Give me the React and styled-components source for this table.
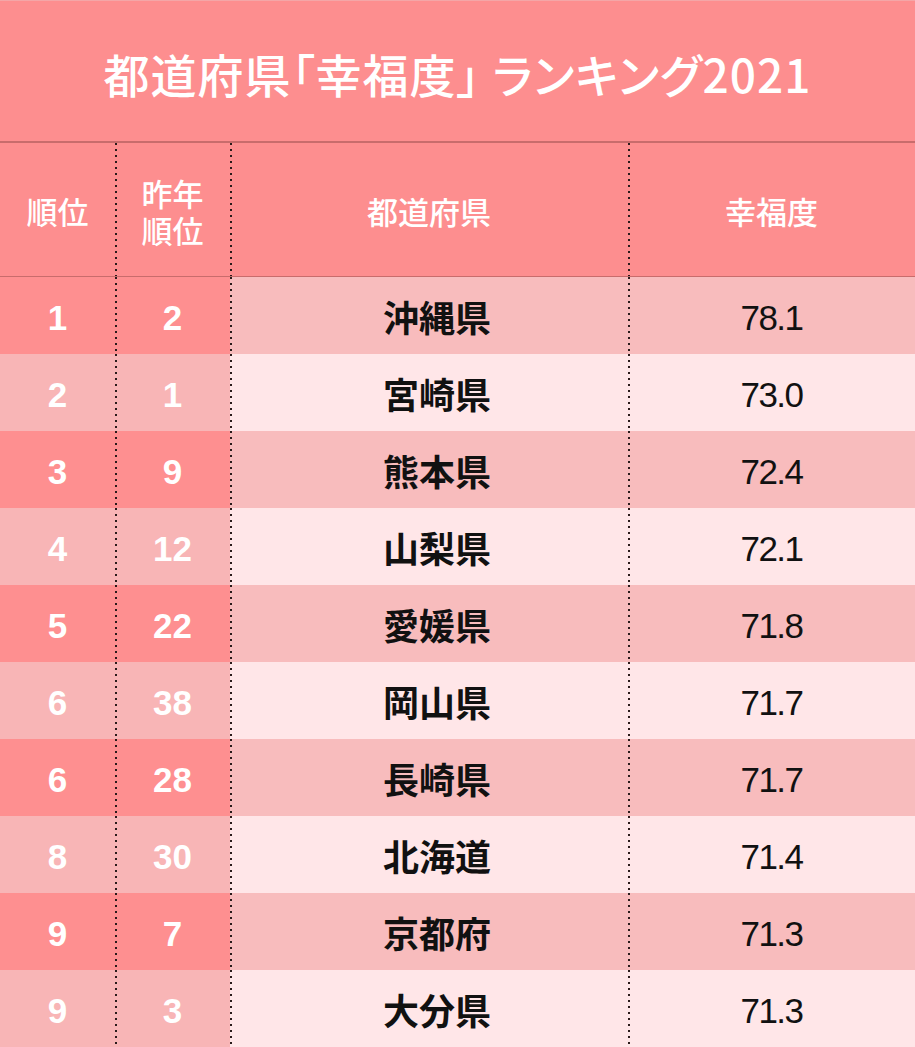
import React from 'react';
import styled, { createGlobalStyle } from 'styled-components';

const GlobalStyle = createGlobalStyle`
  html, body {
    margin: 0;
    padding: 0;
    background: #fff;
  }
  body {
    font-family: "Liberation Sans", "Noto Sans CJK JP", sans-serif;
  }
`;

const JP = '"Noto Sans CJK JP", "Liberation Sans", sans-serif';
const NUM = '"Liberation Sans", "Noto Sans CJK JP", sans-serif';

const dots = `repeating-linear-gradient(to bottom, #2a1a1a 0 2px, transparent 2px 6px)`;

const Page = styled.div`
  width: 915px;
  height: 1047px;
  overflow: hidden;
  background: #fd8e8f;
`;

const Title = styled.h1`
  margin: 0;
  height: 143px;
  display: flex;
  align-items: center;
  justify-content: center;
  padding-top: 4px;
  box-sizing: border-box;
  border-top: 1px solid #f4a6a7;
  border-bottom: 2px solid #c86c6c;
  color: #fff;
  font-family: ${JP};
  font-weight: 500;
  font-size: 46px;
  letter-spacing: 1px;
  font-feature-settings: "palt";
`;

const Gap = styled.span`
  display: inline-block;
  width: 12px;
`;

const Table = styled.div`
  display: grid;
  grid-template-columns: 115px 115px 398px 1fr;
  grid-template-rows: 134px repeat(10, 77px);
`;

const tones = {
  head: '#fd8e8f',
  strongA: '#fe8f90',
  softA: '#f8bcbd',
  strongB: '#f8b5b6',
  softB: '#ffe6e8',
};

const Cell = styled.div`
  display: flex;
  align-items: center;
  justify-content: center;
  text-align: center;
  background-color: ${p => tones[p.$tone]};
  background-image: ${p => (p.$dotted ? dots : 'none')};
  background-size: 2px 100%;
  background-repeat: no-repeat;
  background-position: left top;
  ${p => p.$head && `border-bottom: 1px solid #c86c6c;`}
`;

const HeadText = styled.span`
  color: #fff;
  font-family: ${JP};
  font-weight: 500;
  font-size: 31px;
  line-height: 37px;
  padding-top: 2px;
`;

const Rank = styled.span`
  color: #fff;
  font-family: ${NUM};
  font-weight: 700;
  font-size: 35px;
  padding-top: 4px;
`;

const Pref = styled.span`
  color: #111;
  font-family: ${JP};
  font-weight: 700;
  font-size: 36px;
  padding-left: 16px;
`;

const Score = styled.span`
  color: #111;
  font-family: ${NUM};
  font-size: 35px;
  letter-spacing: -1.5px;
  padding-top: 4px;
`;

const rows = [
  [1, 2, '沖縄県', '78.1'],
  [2, 1, '宮崎県', '73.0'],
  [3, 9, '熊本県', '72.4'],
  [4, 12, '山梨県', '72.1'],
  [5, 22, '愛媛県', '71.8'],
  [6, 38, '岡山県', '71.7'],
  [6, 28, '長崎県', '71.7'],
  [8, 30, '北海道', '71.4'],
  [9, 7, '京都府', '71.3'],
  [9, 3, '大分県', '71.3'],
];

export default function App() {
  return (
    <Page>
      <GlobalStyle />
      <Title>
        都道府県「幸福度」<Gap />ランキング2021
      </Title>
      <Table>
        <Cell $tone="head" $head>
          <HeadText>順位</HeadText>
        </Cell>
        <Cell $tone="head" $head $dotted>
          <HeadText>
            昨年
            <br />
            順位
          </HeadText>
        </Cell>
        <Cell $tone="head" $head $dotted>
          <HeadText>都道府県</HeadText>
        </Cell>
        <Cell $tone="head" $head $dotted>
          <HeadText>幸福度</HeadText>
        </Cell>
        {rows.map(([rank, prev, pref, score], i) => {
          const odd = i % 2 === 0;
          const strong = odd ? 'strongA' : 'strongB';
          const soft = odd ? 'softA' : 'softB';
          return (
            <React.Fragment key={i}>
              <Cell $tone={strong}>
                <Rank>{rank}</Rank>
              </Cell>
              <Cell $tone={strong} $dotted>
                <Rank>{prev}</Rank>
              </Cell>
              <Cell $tone={soft} $dotted>
                <Pref>{pref}</Pref>
              </Cell>
              <Cell $tone={soft} $dotted>
                <Score>{score}</Score>
              </Cell>
            </React.Fragment>
          );
        })}
      </Table>
    </Page>
  );
}
